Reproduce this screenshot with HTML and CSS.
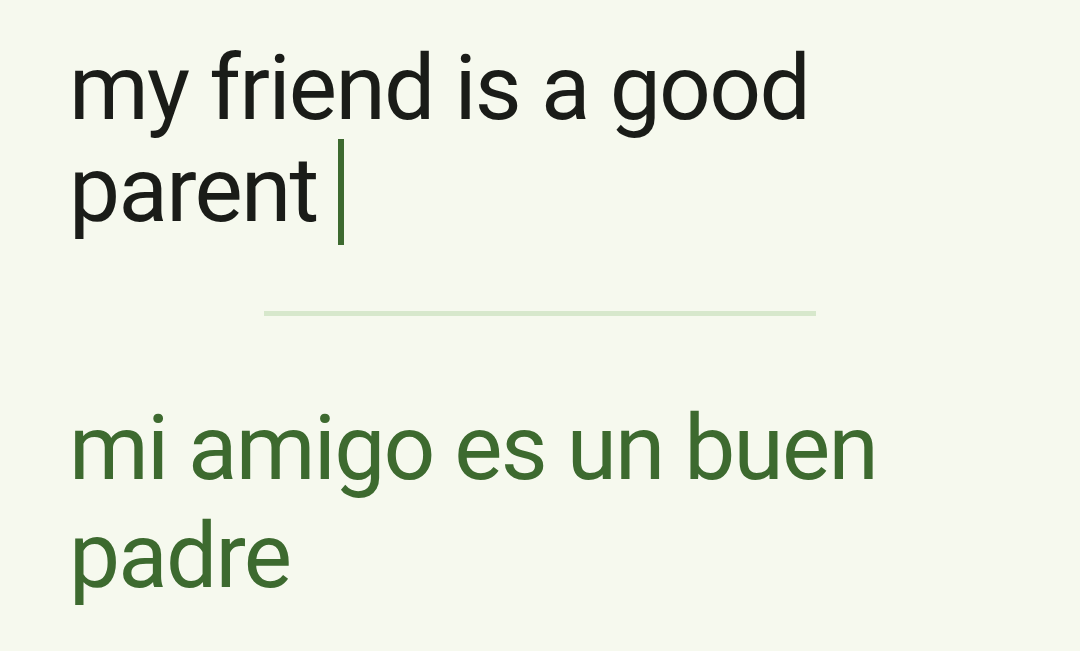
FILE: index.html
```html
<!DOCTYPE html>
<html>
<head>
<meta charset="utf-8">
<link rel="stylesheet" href="styles.css">
</head>
<body>
<main class="screen">
  <div class="source">my friend is a good parent<span class="cursor"></span></div>
  <div class="divider"></div>
  <div class="target">mi amigo es un buen padre</div>
</main>
</body>
</html>
```
FILE: styles.css
```css
html, body {
  margin: 0;
  padding: 0;
  background: #f6f9ee;
}
.screen {
  width: 1080px;
  height: 651px;
  box-sizing: border-box;
  padding: 37px 62px 0 69px;
  font-family: Roboto, "Noto Sans", sans-serif;
  overflow: hidden;
  display: flex;
  flex-direction: column;
}
.source {
  font-size: 91px;
  line-height: 102px;
  letter-spacing: -1.7px;
  color: #1a1c18;
}
.cursor {
  display: inline-block;
  width: 6px;
  height: 106px;
  margin-left: 20px;
  margin-bottom: -5px;
  vertical-align: -19px;
  background: #3d6a2f;
}
.divider {
  align-self: center;
  width: 552px;
  height: 5px;
  margin-top: 70px;
  margin-left: -7px;
  background: #d7e8cc;
}
.target {
  margin-top: 78px;
  font-size: 91px;
  line-height: 108px;
  letter-spacing: -1.8px;
  color: #3d6a2f;
}
```
